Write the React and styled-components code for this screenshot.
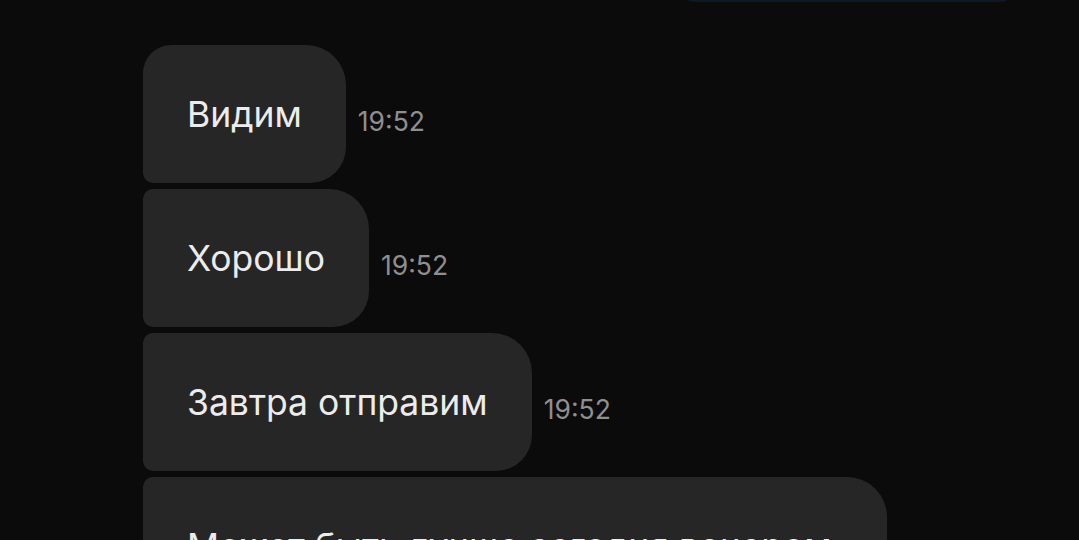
import styled, { createGlobalStyle } from "styled-components";

const GlobalStyle = createGlobalStyle`
  html, body {
    margin: 0;
    padding: 0;
    background: #0b0b0b;
    overflow: hidden;
  }
  body {
    font-family: Inter, "Noto Sans", sans-serif;
  }
`;

const Screen = styled.div`
  width: 1079px;
  height: 540px;
  overflow: hidden;
  background: #0b0b0b;
`;

/* the chat is scrolled, so the list starts above the top edge */
const Feed = styled.div`
  display: flex;
  flex-direction: column;
  gap: 6px;
  padding: 0 69px 0 143px;
  margin-top: -136px;
`;

const OutRow = styled.div`
  display: flex;
  justify-content: flex-end;
  margin-bottom: 37px;
`;

const OutBubble = styled.div`
  width: 349px;
  height: 138px;
  background: #0c1926;
  border-radius: 36px 36px 8px 36px;
`;

const Row = styled.div`
  display: flex;
  align-items: center;
  gap: 12px;
`;

const Bubble = styled.div`
  background: #262626;
  color: #ececec;
  font-size: 35.5px;
  line-height: 40px;
  padding: 50px 44px 48px;
  max-width: 656px;
  border-radius: ${(p) => (p.$first ? "28px" : "10px")} 40px 36px 10px;
`;

const Time = styled.span`
  color: #8f8f8f;
  font-size: 26.5px;
  margin-top: 13px;
`;

const messages = [
  { text: "Видим", time: "19:52" },
  { text: "Хорошо", time: "19:52" },
  { text: "Завтра отправим", time: "19:52" },
  { text: "Может быть лучше сегодня вечером отправим?", time: "19:53" },
];

function App() {
  return (
    <Screen>
      <GlobalStyle />
      <Feed>
        <OutRow>
          <OutBubble />
        </OutRow>
        {messages.map((m, i) => (
          <Row key={`msg-${i}`}>
            <Bubble $first={i === 0}>{m.text}</Bubble>
            <Time>{m.time}</Time>
          </Row>
        ))}
      </Feed>
    </Screen>
  );
}

export default App;
